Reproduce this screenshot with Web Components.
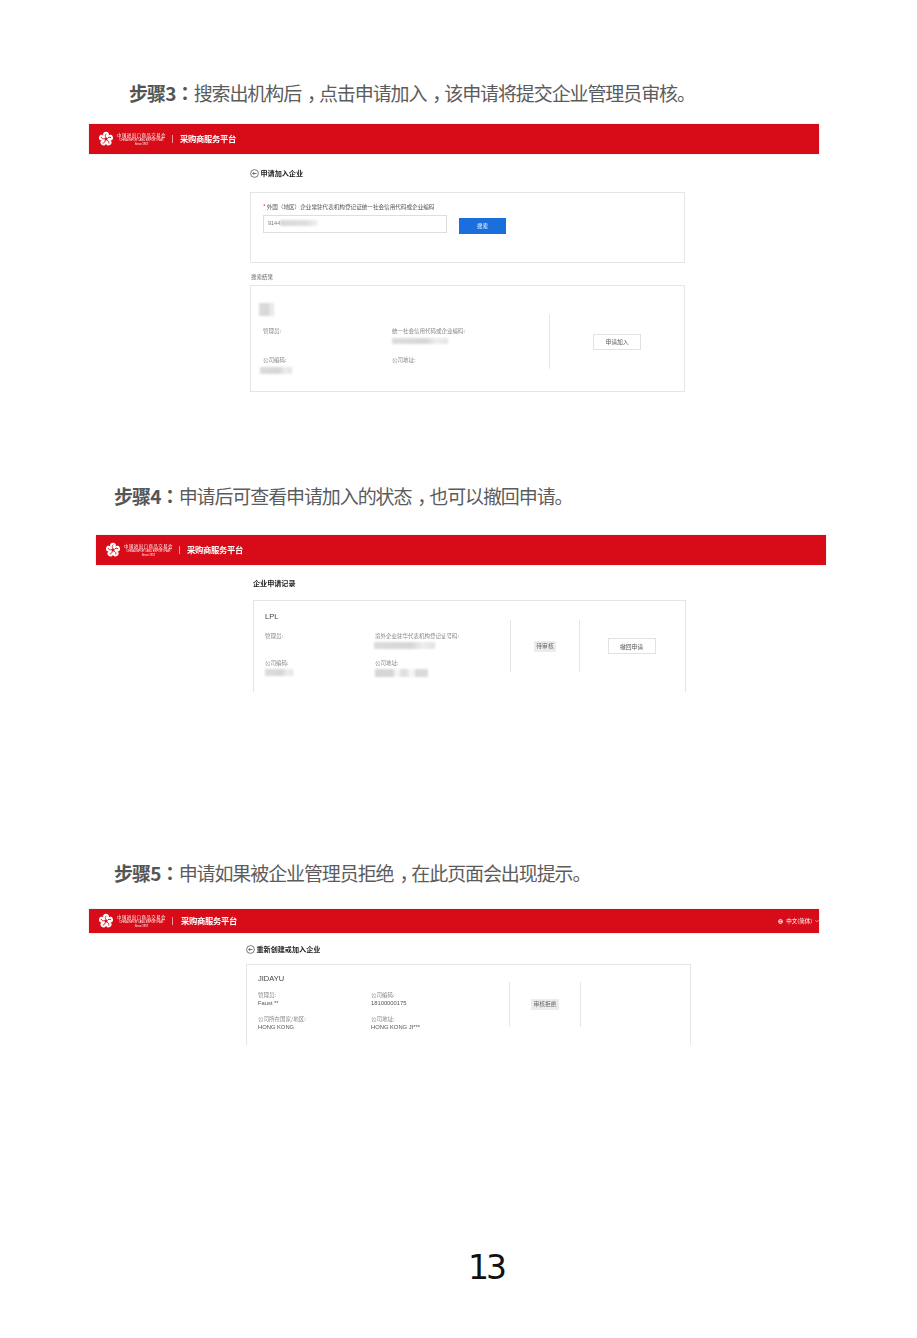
<!DOCTYPE html>
<html lang="zh">
<head>
<meta charset="utf-8">
<title>步骤3-5</title>
<style>
  html, body { margin: 0; padding: 0; background: #fff; }
  body { width: 917px; height: 1338px; overflow: hidden; font-family: "Noto Sans CJK SC", "Liberation Sans", sans-serif; }
  /* the original document sets its commas low but in the middle of the cell */
  .pc { padding-left: 6px; letter-spacing: -7.1px; }
</style>
</head>
<body>

<step-heading style="--x:129px;--top:78px" label="步骤3">搜索出机构后<span class="pc">，</span>点击申请加入<span class="pc">，</span>该申请将提交企业管理员审核。</step-heading>
<portal-shot style="--x:89px;--top:16px;--bar:30px;--gap:13px;--inner:161px">
  <back-title>申请加入企业</back-title>
  <plain-panel style="--h:71px;--mt:13px;--pad:10px 0 0 12px">
    <field-label required>外国（地区）企业常驻代表机构登记证统一社会信用代码或企业编码</field-label>
    <search-row></search-row>
  </plain-panel>
  <small-caption>搜索结果</small-caption>
  <record-card style="--w:435px;--h:107px;--pad:17px 0 0 8px;--field-x:4px;--field-top:11px;--value-gap:3px;--cols:129px 157px;--divider-top:28px;--divider-h:55px">
    <smudge-block style="--w:15px;--h:13px"></smudge-block>
    <record-field slot="fields" label="管理员:"></record-field>
    <record-field slot="fields" label="统一社会信用代码或企业编码:"><smudge-block style="--w:56px;--h:6px"></smudge-block></record-field>
    <record-field slot="fields" label="公司编码:"><smudge-block style="--w:32px;--h:7px;margin-left:-3px"></smudge-block></record-field>
    <record-field slot="fields" label="公司地址:"></record-field>
    <side-cell slot="side" style="--w:135px"><outline-button>申请加入</outline-button></side-cell>
  </record-card>
</portal-shot>

<step-heading style="--x:114px;--top:89px" label="步骤4">申请后可查看申请加入的状态<span class="pc">，</span>也可以撤回申请。</step-heading>
<portal-shot style="--x:96px;--top:24px;--bar:30px;--gap:12px;--inner:157px">
  <back-title plain>企业申请记录</back-title>
  <record-card open style="--h:92px;--mt:11px;--pad:11px 0 0 11px;--cols:110px 135px;--field-top:10px;--value-gap:2px;--row-gap:7px;--divider-top:19px;--divider-h:52px">
    <card-name>LPL</card-name>
    <record-field slot="fields" label="管理员:"></record-field>
    <record-field slot="fields" label="境外企业驻华代表机构登记证号码:"><smudge-block style="--w:61px;--h:7px;margin-left:-1px"></smudge-block></record-field>
    <record-field slot="fields" label="公司编码:"><smudge-block style="--w:28px;--h:7px"></smudge-block></record-field>
    <record-field slot="fields" label="公司地址:"><smudge-block style="--w:53px;--h:8px" broken></smudge-block></record-field>
    <side-cell slot="side" style="--w:69px"><status-chip>待审核</status-chip></side-cell>
    <side-cell slot="side" style="--w:106px;padding-right:2px"><outline-button>撤回申请</outline-button></side-cell>
  </record-card>
</portal-shot>

<step-heading style="--x:114px;--top:166px" label="步骤5">申请如果被企业管理员拒绝<span class="pc">，</span>在此页面会出现提示。</step-heading>
<portal-shot style="--x:89px;--top:21px;--bar:24px;--gap:10px;--inner:157px;--logo-gap:8px">
  <span slot="locale">中文(简体)</span>
  <back-title>重新创建或加入企业</back-title>
  <record-card open style="--w:445px;--h:81px;--mt:9px;--pad:9px 0 0 11px;--cols:113px 135px;--divider-top:17px;--divider-h:45px;--row-gap:4px;--field-top:7px;--value-gap:0px;--value-size:5.8px">
    <card-name>JIDAYU</card-name>
    <record-field slot="fields" label="管理员:">Faust **</record-field>
    <record-field slot="fields" label="公司编码:">18100000175</record-field>
    <record-field slot="fields" label="公司所在国家/地区:">HONG KONG</record-field>
    <record-field slot="fields" label="公司地址:">HONG KONG JI***</record-field>
    <side-cell slot="side" style="--w:71px"><status-chip>审核拒绝</status-chip></side-cell>
    <side-cell slot="side" style="--w:110px"></side-cell>
  </record-card>
</portal-shot>

<page-number>13</page-number>

<script>
// small helper so every element below gets an open shadow root from one string
function shadow (el, html) {
  const t = document.createElement('template')
  t.innerHTML = html
  el.attachShadow({ mode: 'open' }).appendChild(t.content.cloneNode(true))
}

customElements.define('step-heading', class extends HTMLElement {
  connectedCallback () {
    if (this.shadowRoot) return
    shadow(this, `
    <style>
      :host {
        display: block;
        margin: var(--top) 0 0 var(--x);
        font: 400 19px/30px "Noto Sans CJK SC", sans-serif;
        letter-spacing: -1.1px;
        color: #5c5c5c;
        white-space: nowrap;
      }
      b { font-weight: 700; color: #555; letter-spacing: -.9px; }
      b span { font-family: "Noto Sans CJK TC", sans-serif; }
    </style>
    <b>${this.getAttribute('label')}<span lang="zh-TW">：</span></b><slot></slot>`)
  }
})

customElements.define('portal-shot', class extends HTMLElement {
  constructor () {
    super()
    shadow(this, `
    <style>
      :host {
        display: block;
        width: 730px;
        margin: var(--top) 0 0 var(--x);
        font-family: "Noto Sans CJK SC", "Liberation Sans", sans-serif;
        filter: blur(.4px);
      }
      header {
        height: var(--bar);
        background: #d80c18;
        display: flex;
        align-items: center;
        padding: 0 0 0 9px;
        color: #fff;
        box-shadow: 0 0 1px #bbb;
      }
      .mark { display: flex; align-items: center; gap: 3px; }
      .fair { display: flex; flex-direction: column; align-items: center; width: 49px; }
      .cn { font: 400 4.4px/8px "Noto Sans CJK SC", serif; letter-spacing: .5px; white-space: nowrap; }
      .en { font: 400 2.7px/4px "Liberation Sans", sans-serif; white-space: nowrap; }
      .since { font: 2.7px/4px "Liberation Sans", sans-serif; }
      .sep { width: 1px; height: 8px; background: #f09a9f; margin: 0 var(--logo-gap, 7px) 0 6px; }
      .name { font-size: 8.3px; font-weight: 700; letter-spacing: -.3px; line-height: 10px; margin-top: -2px; }
      .locale { margin-left: auto; display: flex; align-items: center; gap: 3px; font-size: 5.5px; }
      .locale svg { display: block; }
      .locale:not(.on) { display: none; }
      main { padding: var(--gap) 0 0 var(--inner); }
    </style>
    <header>
      <div class="mark">
        <svg width="16" height="16" viewBox="0 0 24 24">
          <g fill="#fff">
            <path id="petal" d="M12 12C7.500 9 6.800 4.500 8.500 2.500c1.500-1.700 5.500-1.700 7 0 1.700 2 1 6.500-3.500 9.500z"/>
            <use href="#petal" transform="rotate(72 12 12)"/>
            <use href="#petal" transform="rotate(144 12 12)"/>
            <use href="#petal" transform="rotate(216 12 12)"/>
            <use href="#petal" transform="rotate(288 12 12)"/>
          </g>
          <g fill="none" stroke="#d80c18" stroke-width="1.300">
            <path id="vein" d="M12 10c-1.500-2-1.500-4 .5-6"/>
            <use href="#vein" transform="rotate(72 12 12)"/>
            <use href="#vein" transform="rotate(144 12 12)"/>
            <use href="#vein" transform="rotate(216 12 12)"/>
            <use href="#vein" transform="rotate(288 12 12)"/>
          </g>
          <circle cx="12" cy="12" r="2.200" fill="#d80c18"/>
        </svg>
        <div class="fair">
          <span class="cn">中国进出口商品交易会</span>
          <span class="en">CHINA IMPORT AND EXPORT FAIR</span>
          <span class="since">Since 1957</span>
        </div>
      </div>
      <i class="sep"></i>
      <span class="name">采购商服务平台</span>
      <div class="locale">
        <svg width="5" height="5" viewBox="0 0 12 12" fill="none" stroke="#fff" stroke-width="1.500"><circle cx="6" cy="6" r="5"/><path d="M1 6h10M6 1c-3 3-3 7 0 10M6 1c3 3 3 7 0 10"/></svg>
        <slot name="locale"></slot>
        <svg width="4" height="4" viewBox="0 0 10 8" fill="none" stroke="#fff" stroke-width="1.500"><path d="M1 2l4 4 4-4"/></svg>
      </div>
    </header>
    <main><slot></slot></main>`)
    // only the third shot passes a language switch
    queueMicrotask(() => {
      if (this.querySelector('[slot=locale]')) this.shadowRoot.querySelector('.locale').classList.add('on')
    })
  }
})

customElements.define('back-title', class extends HTMLElement {
  constructor () {
    super()
    shadow(this, `
    <style>
      :host {
        display: flex;
        align-items: center;
        gap: 1.5px;
        height: 12px;
        font-size: 7.1px;
        font-weight: 700;
        color: #222;
        white-space: nowrap;
      }
      :host([plain]) svg { display: none; }
      svg { display: block; flex: none; }
    </style>
    <svg width="9" height="9" viewBox="0 0 18 18" fill="none" stroke="#333" stroke-width="1.300"><circle cx="9" cy="9" r="7.800"/><path d="M13 9H5.500M8.500 6L5.500 9l3 3"/></svg>
    <slot></slot>`)
  }
})

customElements.define('plain-panel', class extends HTMLElement {
  constructor () {
    super()
    shadow(this, `
    <style>
      :host {
        display: block;
        box-sizing: border-box;
        width: 435px;
        height: var(--h);
        margin-top: var(--mt, 0);
        padding: var(--pad);
        border: 1px solid #e6e6e6;
      }
    </style>
    <slot></slot>`)
  }
})

customElements.define('field-label', class extends HTMLElement {
  connectedCallback () {
    if (this.shadowRoot) return
    shadow(this, `
    <style>
      :host { display: block; font-size: 5.6px; line-height: 8px; color: #555; white-space: nowrap; }
      i { color: #d80c18; font-style: normal; margin-right: 1px; }
    </style>
    ${this.hasAttribute('required') ? '<i>*</i>' : ''}<slot></slot>`)
  }
})

customElements.define('search-row', class extends HTMLElement {
  constructor () {
    super()
    shadow(this, `
    <style>
      :host { display: flex; align-items: flex-start; gap: 12px; margin-top: 4px; }
      .input {
        box-sizing: border-box;
        width: 184px;
        height: 18px;
        border: 1px solid #dedede;
        display: flex;
        align-items: center;
        padding: 0 0 2px 4px;
        font: 5.5px "Liberation Sans", sans-serif;
        color: #777;
      }
      .input i {
        display: block;
        width: 38px;
        height: 6px;
        background: linear-gradient(90deg, #d8d8d8, #dedede 70%, #f2f2f2);
        filter: blur(1px);
      }
      button {
        width: 47px;
        height: 16px;
        margin-top: 3px;
        padding: 0;
        border: 0;
        background: #1a6fdc;
        color: #fff;
        font: 5.5px "Noto Sans CJK SC", sans-serif;
      }
    </style>
    <div class="input">9144<i></i></div>
    <button>搜索</button>`)
  }
})

customElements.define('small-caption', class extends HTMLElement {
  constructor () {
    super()
    shadow(this, `
    <style>
      :host { display: block; height: 22px; padding: 9px 0 0 1px; box-sizing: border-box; font-size: 5.5px; line-height: 10px; color: #666; }
    </style>
    <slot></slot>`)
  }
})

customElements.define('record-card', class extends HTMLElement {
  constructor () {
    super()
    shadow(this, `
    <style>
      :host {
        display: flex;
        box-sizing: border-box;
        width: var(--w, 433px);
        height: var(--h);
        margin-top: var(--mt, 0);
        border: 1px solid #e6e6e6;
      }
      :host([open]) { border-bottom: 0; }
      .body { flex: 1; padding: var(--pad); min-width: 0; }
      .fields {
        display: grid;
        grid-template-columns: var(--cols);
        row-gap: var(--row-gap, 9px);
        margin: var(--field-top, 8px) 0 0 var(--field-x, 0);
      }
      .side { display: flex; flex: none; padding-top: var(--divider-top); align-items: flex-start; }
    </style>
    <div class="body">
      <slot></slot>
      <div class="fields"><slot name="fields"></slot></div>
    </div>
    <div class="side"><slot name="side"></slot></div>`)
  }
})

customElements.define('card-name', class extends HTMLElement {
  constructor () {
    super()
    shadow(this, `
    <style>
      :host { display: block; font: 7.5px/10px "Liberation Sans", sans-serif; color: #444; }
    </style>
    <slot></slot>`)
  }
})

customElements.define('record-field', class extends HTMLElement {
  connectedCallback () {
    if (this.shadowRoot) return
    shadow(this, `
    <style>
      :host { display: block; height: 20px; color: #555; font: var(--value-size, 6px)/8px "Liberation Sans", "Noto Sans CJK SC", sans-serif; white-space: nowrap; }
      .label { display: block; color: #888; font: 5.5px/8px "Noto Sans CJK SC", sans-serif; margin-bottom: var(--value-gap, 0); }
    </style>
    <span class="label">${this.getAttribute('label')}</span>
    <slot></slot>`)
  }
})

customElements.define('smudge-block', class extends HTMLElement {
  constructor () {
    super()
    shadow(this, `
    <style>
      :host {
        display: block;
        width: var(--w);
        height: var(--h);
        background: linear-gradient(90deg, #dcdcdc, #d6d6d6 60%, #eeeeee 80%, #e2e2e2);
        filter: blur(1px);
      }
      :host([broken]) {
        background: linear-gradient(90deg, #d6d6d6 0 35%, #f4f4f4 35% 48%, #e0e0e0 48% 62%, #f4f4f4 62% 75%, #dadada 75%);
      }
    </style>`)
  }
})

customElements.define('side-cell', class extends HTMLElement {
  constructor () {
    super()
    shadow(this, `
    <style>
      :host {
        display: flex;
        align-items: center;
        justify-content: center;
        box-sizing: border-box;
        width: var(--w);
        height: var(--divider-h);
        border-left: 1px solid #e6e6e6;
      }
    </style>
    <slot></slot>`)
  }
})

customElements.define('outline-button', class extends HTMLElement {
  constructor () {
    super()
    shadow(this, `
    <style>
      :host {
        display: flex;
        align-items: center;
        justify-content: center;
        box-sizing: border-box;
        width: 48px;
        height: 16px;
        border: 1px solid #e2e2e2;
        font-size: 5.8px;
        color: #555;
      }
    </style>
    <slot></slot>`)
  }
})

customElements.define('status-chip', class extends HTMLElement {
  constructor () {
    super()
    shadow(this, `
    <style>
      :host {
        display: block;
        padding: 1px 2px 2px;
        background: #ececec;
        font-size: 5.8px;
        line-height: 8px;
        color: #666;
      }
    </style>
    <slot></slot>`)
  }
})

customElements.define('page-number', class extends HTMLElement {
  constructor () {
    super()
    shadow(this, `
    <style>
      :host {
        display: block;
        margin: 203px 0 0 468px;
        font: 400 33px/40px "DejaVu Sans", sans-serif;
        letter-spacing: -3px;
        color: #111;
      }
    </style>
    <slot></slot>`)
  }
})
</script>
</body>
</html>
